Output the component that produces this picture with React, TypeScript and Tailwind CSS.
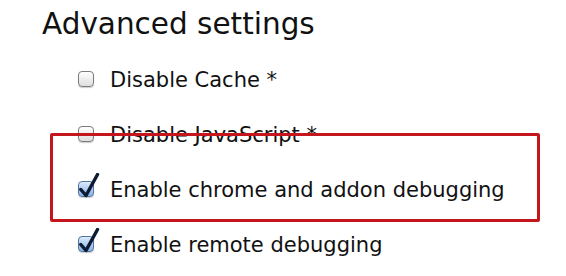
import React from 'react';

type Item = { label: string; checked: boolean };

const items: Item[] = [
    { label: 'Disable Cache *', checked: false },
    { label: 'Disable JavaScript *', checked: false },
    { label: 'Enable chrome and addon debugging', checked: true },
    { label: 'Enable remote debugging', checked: true },
];

function Box({ checked }: { checked: boolean }) {
    if (!checked) {
        return (
            <span className="block shrink-0 w-[16px] h-[16px] rounded-[4px] border border-[#7c7c7c] bg-gradient-to-b from-white to-[#dedede] shadow-[0_1px_1px_rgba(0,0,0,0.2)]" />
        );
    }
    return (
        <span className="relative block shrink-0 w-[16px] h-[16px]">
            <span className="block w-[16px] h-[16px] rounded-[4px] border border-[#55749f] bg-gradient-to-b from-[#dceafb] to-[#86b2e8] shadow-[0_1px_1px_rgba(0,0,0,0.2)]" />
            <svg className="absolute -top-[8px] left-[1px]" width="21" height="26" viewBox="0 0 21 26">
                <path d="M1.8 16.5 L7 22.5 L18.5 1.5" fill="none" stroke="#0d1a33" strokeWidth="3.4" strokeLinecap="round" strokeLinejoin="round" />
            </svg>
        </span>
    );
}

export default function App() {
    return (
        <div className="relative w-[566px] h-[276px] bg-white overflow-hidden pl-[42px] pt-[6px] text-[#111]" style={{ fontFamily: '"DejaVu Sans", sans-serif' }}>
            <h1 className="text-[29.5px] leading-[36px]">Advanced settings</h1>
            <ul className="ml-[36px] mt-[27px] flex flex-col gap-[35px]">
                {items.map((it) => (
                    <li key={it.label} className="flex items-center gap-[16px] h-[20px]">
                        <Box checked={it.checked} />
                        <span className="text-[21px] leading-[20px] whitespace-nowrap relative top-[1px]">{it.label}</span>
                    </li>
                ))}
            </ul>
            {/* annotation box */}
            <div className="absolute left-[50px] top-[133px] w-[490px] h-[89px] border-[3px] border-[#c4161c] rounded-[2px]" />
        </div>
    );
}
